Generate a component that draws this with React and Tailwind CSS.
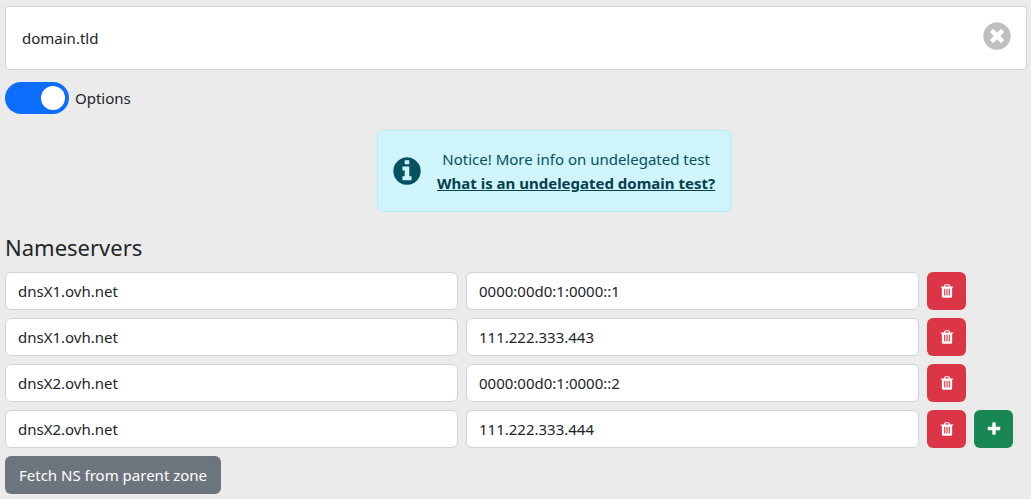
import { useState } from 'react';

const DISC =
  'M1664 896q0 209-103 385.500t-279.500 279.500-385.500 103-385.500-103-279.500-279.500-103-385.500 103-385.500 279.500-279.500 385.500-103 385.500 103 279.500 279.500 103 385.500z';

const ICONS = {
  clear:
    'M1277 1122q0-26-19-45l-181-181 181-181q19-19 19-45 0-27-19-46l-90-90q-19-19-46-19-26 0-45 19l-181 181-181-181q-19-19-45-19-27 0-46 19l-90 90q-19 19-19 46 0 26 19 45l181 181-181 181q-19 19-19 45 0 27 19 46l90 90q19 19 46 19 26 0 45-19l181-181 181 181q19 19 45 19 27 0 46-19l90-90q19-19 19-46z' +
    DISC,
  info:
    'M1152 1376v-160q0-14-9-23t-23-9h-96v-512q0-14-9-23t-23-9h-320q-14 0-23 9t-9 23v160q0 14 9 23t23 9h96v320h-96q-14 0-23 9t-9 23v160q0 14 9 23t23 9h448q14 0 23-9t9-23zM1024 480v-160q0-14-9-23t-23-9h-192q-14 0-23 9t-9 23v160q0 14 9 23t23 9h192q14 0 23-9t9-23z' +
    DISC,
  trash:
    'M704 1376v-704q0-14-9-23t-23-9h-64q-14 0-23 9t-9 23v704q0 14 9 23t23 9h64q14 0 23-9t9-23zm256 0v-704q0-14-9-23t-23-9h-64q-14 0-23 9t-9 23v704q0 14 9 23t23 9h64q14 0 23-9t9-23zm256 0v-704q0-14-9-23t-23-9h-64q-14 0-23 9t-9 23v704q0 14 9 23t23 9h64q14 0 23-9t9-23zm-544-992h448l-48-117q-7-9-17-11h-317q-10 2-17 11zm928 32v64q0 14-9 23t-23 9h-96v948q0 83-47 143.500t-113 60.500h-832q-66 0-113-58.500t-47-141.500v-952h-96q-14 0-23-9t-9-23v-64q0-14 9-23t23-9h309l70-167q15-37 54-63t79-26h320q40 0 79 26t54 63l70 167h309q14 0 23 9t9 23z',
  plus:
    'M1600 736v192q0 40-28 68t-68 28h-416v416q0 40-28 68t-68 28h-192q-40 0-68-28t-28-68v-416h-416q-40 0-68-28t-28-68v-192q0-40 28-68t68-28h416v-416q0-40 28-68t68-28h192q40 0 68 28t28 68v416h416q40 0 68 28t28 68z',
};

function Icon({ name, className }) {
  return (
    <svg viewBox="0 0 1792 1792" fill="currentColor" fillRule="evenodd" aria-hidden="true" className={className}>
      <path d={ICONS[name]} />
    </svg>
  );
}

const FIELD =
  'h-[38px] min-w-0 flex-1 rounded-md border border-[#ced4da] bg-white px-3 focus:outline-2 focus:outline-[#86b7fe]';
const SQUARE = 'flex h-[38px] w-[39px] items-center justify-center rounded-md text-white';

const INITIAL = [
  { id: 1, ns: 'dnsX1.ovh.net', ip: '0000:00d0:1:0000::1' },
  { id: 2, ns: 'dnsX1.ovh.net', ip: '111.222.333.443' },
  { id: 3, ns: 'dnsX2.ovh.net', ip: '0000:00d0:1:0000::2' },
  { id: 4, ns: 'dnsX2.ovh.net', ip: '111.222.333.444' },
];

export default function App() {
  const [domain, setDomain] = useState('domain.tld');
  const [options, setOptions] = useState(true);
  const [rows, setRows] = useState(INITIAL);

  const edit = (id, key, value) => setRows(rows.map((r) => (r.id === id ? { ...r, [key]: value } : r)));
  const remove = (id) => setRows(rows.filter((r) => r.id !== id));
  const add = () => setRows([...rows, { id: Date.now(), ns: '', ip: '' }]);

  return (
    <main className="min-h-screen bg-[#ebebeb] pt-1.5 pr-1 pb-1 pl-[5px] font-['Noto_Sans',sans-serif] text-[15px] leading-6 text-[#212529]">
      <div className="flex h-16 items-center rounded-sm border border-[#ced4da] bg-white pr-[13px]">
        <input
          aria-label="Domain name"
          value={domain}
          onChange={(e) => setDomain(e.target.value)}
          className="h-full min-w-0 flex-1 px-4 outline-none"
        />
        <button type="button" aria-label="Clear" onClick={() => setDomain('')} className="pb-1 text-[#bfbfbf]">
          <Icon name="clear" className="size-8" />
        </button>
      </div>

      <label className="mt-3 flex w-fit items-center gap-1.5">
        <input
          type="checkbox"
          role="switch"
          checked={options}
          onChange={(e) => setOptions(e.target.checked)}
          className="flex h-8 w-16 appearance-none items-center rounded-full bg-[#adb5bd] px-1 before:size-6 before:rounded-full before:bg-white checked:justify-end checked:bg-[#0d6efd]"
        />
        Options
      </label>

      {options && (
        <>
          <div className="mt-4 ml-[36.4%] flex w-fit items-center gap-3.5 rounded-md border border-[#b6effb] bg-[#cff4fc] py-4 pr-4 pl-[13px] text-[#055160]">
            <Icon name="info" className="size-8 shrink-0" />
            <p className="text-center">
              Notice! More info on undelegated test
              <br />
              <a href="#undelegated" className="font-bold text-[#04414d] underline">
                What is an undelegated domain test?
              </a>
            </p>
          </div>

          <h2 className="mt-5 mb-2.5 text-[22px] leading-[30px]">Nameservers</h2>

          <form className="flex flex-col gap-2" onSubmit={(e) => e.preventDefault()}>
            {rows.map((row, i) => (
              <div key={row.id} className="flex gap-2">
                <input
                  aria-label="Nameserver"
                  value={row.ns}
                  onChange={(e) => edit(row.id, 'ns', e.target.value)}
                  className={FIELD}
                />
                <input
                  aria-label="IP address"
                  value={row.ip}
                  onChange={(e) => edit(row.id, 'ip', e.target.value)}
                  className={FIELD}
                />
                <div className="flex w-[100px] gap-2">
                  <button
                    type="button"
                    aria-label="Remove nameserver"
                    onClick={() => remove(row.id)}
                    className={`${SQUARE} bg-[#dc3545]`}
                  >
                    <Icon name="trash" className="size-4" />
                  </button>
                  {i === rows.length - 1 && (
                    <button
                      type="button"
                      aria-label="Add nameserver"
                      onClick={add}
                      className={`${SQUARE} bg-[#198754]`}
                    >
                      <Icon name="plus" className="size-4" />
                    </button>
                  )}
                </div>
              </div>
            ))}
            <button type="button" className="h-[38px] w-fit rounded-md bg-[#6c757d] px-3.5 text-white">
              Fetch NS from parent zone
            </button>
          </form>
        </>
      )}
    </main>
  );
}
